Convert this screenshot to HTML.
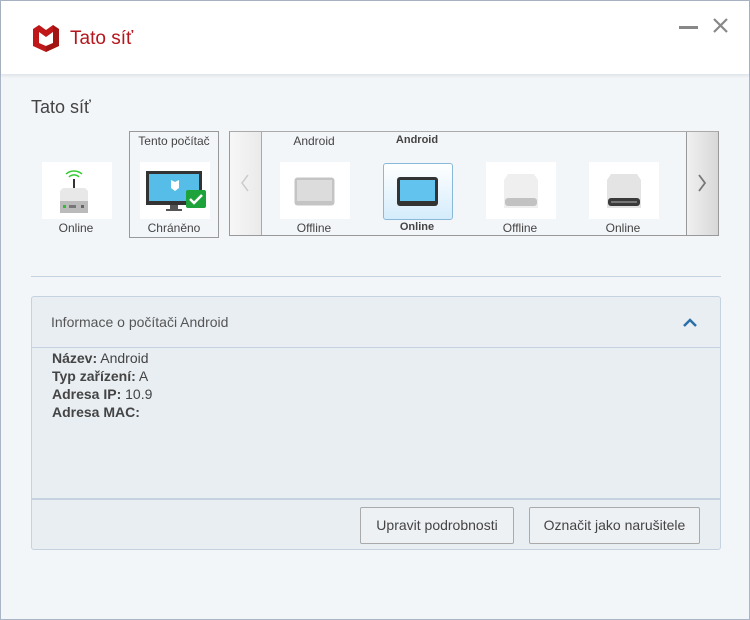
<!DOCTYPE html>
<html><head><meta charset="utf-8"><style>
*{margin:0;padding:0;box-sizing:border-box}
body{width:750px;height:620px;overflow:hidden;font-family:"Liberation Sans","DejaVu Sans",sans-serif;background:#f3f6f9;position:relative;color:#444}
.win{position:absolute;left:0;top:0;width:750px;height:620px;border:1px solid #a9b5c4}
.hdr{position:absolute;left:1px;top:1px;width:748px;height:74px;background:#fff;box-shadow:0 1px 3px rgba(0,0,0,.08);border-bottom:1px solid #e1e7ee}
.abs{position:absolute}
.t{font-size:12px;color:#444;position:absolute;text-align:center;width:90px}
.img{position:absolute;background:#fff;width:70px;height:57px}
</style></head><body>
<div class="win"></div>
<div class="hdr"></div>
<svg class="abs" style="left:32px;top:24px" width="28" height="29" viewBox="0 0 28 29"><path d="M1 5 L7 1 L14 6 L21 1 L27 5 L27 22 L14 28 L1 22 Z" fill="#c01818"/><path d="M7 8 L14 13 L21 8 L21 19 L14 22 L7 19 Z" fill="#fff"/><path d="M14 28 L27 22 L27 5 L21 1 L21 19 L14 22Z" fill="#8e1010" opacity=".6"/></svg>
<div class="abs" style="left:70px;top:28px;font-size:19px;color:#b5151b">Tato síť</div>
<div class="abs" style="left:679px;top:26px;width:19px;height:3px;background:#888"></div>
<svg class="abs" style="left:713px;top:18px" width="15" height="15"><path d="M1 1L14 14M14 1L1 14" stroke="#888" stroke-width="2.2"/></svg>

<div class="abs" style="left:31px;top:97px;font-size:18px;color:#444">Tato síť</div>

<!-- router -->
<div class="img" style="left:42px;top:162px"></div>
<svg class="abs" style="left:60px;top:166px" width="34" height="50"><path d="M6 8a12 12 0 0 1 16 0M9 11a7 7 0 0 1 10 0" stroke="#3c3" stroke-width="1.5" fill="none"/><rect x="13" y="13" width="2" height="10" fill="#333"/><path d="M3 22h22l3 3v22H0V25z" fill="#e8e8e8"/><rect x="0" y="35" width="28" height="12" fill="#bbb"/><rect x="3" y="39" width="3" height="3" fill="#3b3"/><rect x="9" y="39" width="7" height="3" fill="#777"/><rect x="21" y="39" width="3" height="3" fill="#666"/></svg>
<div class="t" style="left:31px;top:221px">Online</div>

<!-- this pc -->
<div class="abs" style="left:129px;top:131px;width:90px;height:107px;border:1px solid #999"></div>
<div class="t" style="left:129px;top:134px">Tento počítač</div>
<div class="img" style="left:140px;top:162px"></div>
<svg class="abs" style="left:146px;top:171px" width="60" height="42"><rect x="0" y="0" width="56" height="34" fill="#333"/><rect x="3" y="3" width="50" height="27" fill="#56bde8"/><path d="M25 9l4 2 4-2v8l-4 3-4-3z" fill="#fff"/><rect x="24" y="34" width="8" height="4" fill="#555"/><rect x="20" y="38" width="16" height="2" fill="#555"/><rect x="40" y="19" width="20" height="18" rx="2" fill="#1ea33a"/><path d="M44 28l4 4 8-8" stroke="#fff" stroke-width="2.5" fill="none"/></svg>
<div class="t" style="left:129px;top:221px">Chráněno</div>

<!-- carousel -->
<div class="abs" style="left:229px;top:131px;width:490px;height:105px;border:1px solid #999;border-top-color:#aaa"></div>
<div class="abs" style="left:230px;top:132px;width:32px;height:103px;background:linear-gradient(90deg,#f7f7f7,#eaeaea);border-right:1px solid #aaa"></div>
<svg class="abs" style="left:240px;top:174px" width="10" height="18"><path d="M8 1L2 9l6 8" stroke="#ccc" stroke-width="1.5" fill="none"/></svg>
<div class="abs" style="left:686px;top:132px;width:32px;height:103px;background:linear-gradient(90deg,#f0f0f0,#d8d8d8);border-left:1px solid #999"></div>
<svg class="abs" style="left:697px;top:174px" width="10" height="18"><path d="M2 1l6 8-6 8" stroke="#777" stroke-width="1.8" fill="none"/></svg>

<div class="t" style="left:269px;top:134px">Android</div>
<div class="img" style="left:280px;top:162px"></div>
<svg class="abs" style="left:294px;top:177px" width="42" height="29"><rect x="0.5" y="0.5" width="40" height="28" rx="3" fill="#c4c4c4"/><rect x="3" y="3" width="35" height="21" fill="#dcdcdc"/></svg>
<div class="t" style="left:269px;top:221px">Offline</div>

<div class="t" style="left:372px;top:134px;font-weight:bold;font-size:11px">Android</div>
<div class="abs" style="left:383px;top:163px;width:70px;height:57px;border:1px solid #8ab8d8;border-radius:3px;background:linear-gradient(#fff,#d4ecfb)"></div>
<svg class="abs" style="left:397px;top:177px" width="42" height="29"><rect x="0" y="0" width="41" height="29" rx="3" fill="#333"/><rect x="3" y="3" width="35" height="21" fill="#62c4ee"/></svg>
<div class="t" style="left:372px;top:221px;font-weight:bold;font-size:11px">Online</div>

<div class="img" style="left:486px;top:162px"></div>
<svg class="abs" style="left:502px;top:174px" width="38" height="36"><path d="M6 0h26l4 6v28H2V6z" fill="#efefef"/><rect x="3" y="24" width="32" height="8" rx="3" fill="#c2c2c2"/></svg>
<div class="t" style="left:475px;top:221px">Offline</div>

<div class="img" style="left:589px;top:162px"></div>
<svg class="abs" style="left:605px;top:174px" width="38" height="36"><path d="M6 0h26l4 6v28H2V6z" fill="#e4e4e4"/><rect x="3" y="24" width="32" height="8" rx="3" fill="#3a3a3a"/><rect x="6" y="27" width="26" height="2" fill="#777"/></svg>
<div class="t" style="left:578px;top:221px">Online</div>

<div class="abs" style="left:31px;top:276px;width:690px;height:1px;background:#c5d3e0"></div>

<div class="abs" style="left:31px;top:296px;width:690px;height:254px;border:1px solid #c5d3e0;border-radius:3px;background:#e9eef3"></div>
<div class="abs" style="left:32px;top:347px;width:688px;height:1px;background:#c5d3e0"></div>
<div class="abs" style="left:32px;top:498px;width:688px;height:2px;background:#c5d3e0"></div>
<div class="abs" style="left:51px;top:314px;font-size:14px;color:#555">Informace o počítači Android</div>
<svg class="abs" style="left:682px;top:317px" width="16" height="11"><path d="M2 9l6-6 6 6" stroke="#2a6fa8" stroke-width="2.5" fill="none"/></svg>
<div class="abs" style="left:52px;top:349px;font-size:14px;line-height:18px;color:#444">
<b>Název:</b> Android<br><b>Typ zařízení:</b> A<br><b>Adresa IP:</b> 10.9<br><b>Adresa MAC:</b></div>
<div class="abs" style="left:360px;top:507px;width:154px;height:37px;border:1px solid #aaa;border-radius:2px;background:#eef1f4;font-size:14px;line-height:35px;text-align:center;color:#444">Upravit podrobnosti</div>
<div class="abs" style="left:529px;top:507px;width:171px;height:37px;border:1px solid #aaa;border-radius:2px;background:#eef1f4;font-size:14px;line-height:35px;text-align:center;color:#444">Označit jako narušitele</div>
</body></html>
